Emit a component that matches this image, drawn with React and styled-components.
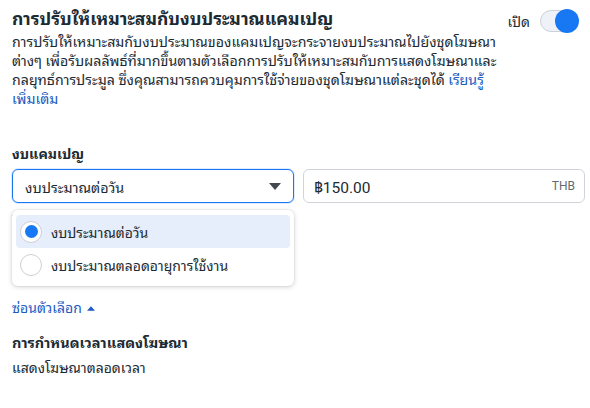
import React from 'react';
import styled, { createGlobalStyle } from 'styled-components';

const GlobalStyle = createGlobalStyle`
  body {
    margin: 0;
    background: #ffffff;
    font-family: Roboto, "Noto Sans Thai Looped", "Noto Sans", sans-serif;
    color: #1c2b33;
  }
`;

const Page = styled.div`
  padding: 8px 12px 0 12px;
  width: 590px;
  box-sizing: border-box;
`;

const HeaderRow = styled.div`
  display: flex;
  justify-content: space-between;
  align-items: flex-start;
`;

const Title = styled.div`
  font-size: 17.5px;
  font-weight: 700;
  line-height: 22px;
  color: #1c2b33;
`;

const ToggleWrap = styled.div`
  display: flex;
  align-items: center;
  gap: 10px;
  font-size: 14px;
  padding-top: 1px;
`;

const Track = styled.div`
  width: 36px;
  height: 20px;
  border-radius: 12px;
  background: #eef1f8;
  border: 1px solid #cbd2d9;
  position: relative;
`;

const Knob = styled.div`
  position: absolute;
  right: -2px;
  top: -2px;
  width: 24px;
  height: 24px;
  border-radius: 50%;
  background: #1877f2;
`;

const Description = styled.p`
  margin: 1px 0 0 0;
  font-size: 14.2px;
  line-height: 19px;
  white-space: nowrap;
  color: #1c2b33;
`;

const Link = styled.a`
  color: #1d5bbf;
  text-decoration: none;
`;

const Section = styled.div`
  margin-top: 35px;
`;

const Label = styled.div`
  font-size: 14px;
  font-weight: 700;
  line-height: 20px;
  margin-bottom: 5px;
`;

const FieldRow = styled.div`
  display: grid;
  grid-template-columns: 282px 282px;
  gap: 9px;
`;

const SelectCol = styled.div`
  position: relative;
`;

const Box = styled.div`
  height: 34px;
  box-sizing: border-box;
  border: 1px solid ${(p) => (p.active ? '#1877f2' : '#d0d4d9')};
  box-shadow: ${(p) => (p.active ? '0 0 0 1px rgba(24,119,242,0.15)' : 'none')};
  border-radius: 6px;
  display: flex;
  align-items: center;
  justify-content: space-between;
  padding: 0 12px;
  background: #fff;
`;

const SelectText = styled.span`
  font-size: 14.3px;
`;

const Amount = styled.span`
  font-size: 15.5px;
  margin-left: -2px;
`;

const Currency = styled.span`
  font-size: 12px;
  color: #5f6b73;
  margin-right: -3px;
`;

const Helper = styled.div`
  font-size: 12px;
  line-height: 16px;
  margin-top: 10px;
  color: #5f6b73;
`;

const Menu = styled.div`
  position: absolute;
  top: 41px;
  left: 0;
  width: 282px;
  box-sizing: border-box;
  padding: 5px 4px;
  background: #fff;
  border-radius: 6px;
  box-shadow: 0 1px 5px rgba(0, 0, 0, 0.18), 0 0 0 1px rgba(0, 0, 0, 0.03);
`;

const Option = styled.div`
  height: 33px;
  display: flex;
  align-items: center;
  gap: 9px;
  padding: 0 8px 0 4px;
  border-radius: 4px;
  font-size: 14px;
  background: ${(p) => (p.selected ? '#e6edfb' : 'transparent')};
`;

const Radio = styled.span`
  width: 22px;
  height: 22px;
  box-sizing: border-box;
  border-radius: 50%;
  border: 1px solid #ccd0d5;
  background: #fff;
  display: flex;
  align-items: center;
  justify-content: center;

  &::after {
    content: '';
    width: 13px;
    height: 13px;
    border-radius: 50%;
    background: ${(p) => (p.checked ? '#1877f2' : 'transparent')};
  }
`;

const Toggler = styled.div`
  margin-top: 69px;
  font-size: 14px;
  line-height: 20px;
  color: #1d5bbf;
  display: flex;
  align-items: center;
  gap: 5px;
`;

const SubTitle = styled.div`
  margin-top: 16px;
  font-size: 14.5px;
  font-weight: 700;
  line-height: 20px;
`;

const SubText = styled.div`
  margin-top: 4px;
  font-size: 14px;
  line-height: 20px;
`;

function Caret({ up }) {
  return (
    <svg width={up ? 8 : 12} height={up ? 5 : 7} viewBox="0 0 12 7">
      <path
        d={up ? 'M0 7 L6 0 L12 7 Z' : 'M0 0 L12 0 L6 7 Z'}
        fill={up ? '#1d5bbf' : '#444950'}
      />
    </svg>
  );
}

export default function App() {
  return (
    <Page>
      <GlobalStyle />
      <HeaderRow>
        <Title>การปรับให้เหมาะสมกับงบประมาณแคมเปญ</Title>
        <ToggleWrap>
          เปิด
          <Track>
            <Knob />
          </Track>
        </ToggleWrap>
      </HeaderRow>
      <Description>
        การปรับให้เหมาะสมกับงบประมาณของแคมเปญจะกระจายงบประมาณไปยังชุดโฆษณา
        <br />
        ต่างๆ เพื่อรับผลลัพธ์ที่มากขึ้นตามตัวเลือกการปรับให้เหมาะสมกับการแสดงโฆษณาและ
        <br />
        กลยุทธ์การประมูล ซึ่งคุณสามารถควบคุมการใช้จ่ายของชุดโฆษณาแต่ละชุดได้{' '}
        <Link>
          เรียนรู้
          <br />
          เพิ่มเติม
        </Link>
      </Description>

      <Section>
        <Label>งบแคมเปญ</Label>
        <FieldRow>
          <SelectCol>
            <Box active>
              <SelectText>งบประมาณต่อวัน</SelectText>
              <Caret />
            </Box>
            <Helper>ใช้จ่ายได้ถึงเงินจำนวนที่กำหนดในแต่ละวันที่</Helper>
            <Menu>
              <Option selected>
                <Radio checked />
                งบประมาณต่อวัน
              </Option>
              <Option>
                <Radio />
                งบประมาณตลอดอายุการใช้งาน
              </Option>
            </Menu>
          </SelectCol>
          <Box>
            <Amount>฿150.00</Amount>
            <Currency>THB</Currency>
          </Box>
        </FieldRow>
      </Section>

      <Toggler>
        ซ่อนตัวเลือก <Caret up />
      </Toggler>
      <SubTitle>การกำหนดเวลาแสดงโฆษณา</SubTitle>
      <SubText>แสดงโฆษณาตลอดเวลา</SubText>
    </Page>
  );
}
